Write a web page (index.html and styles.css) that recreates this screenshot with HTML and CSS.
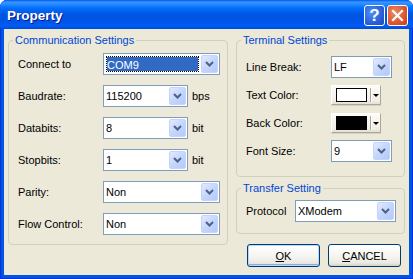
FILE: index.html
```html
<!DOCTYPE html>
<html lang="en">
  <head>
    <meta charset="UTF-8" />
    <title>Property</title>
    <link rel="stylesheet" href="styles.css">
  </head>
  <body>
    <div class="window">
      <!-- Title bar -->
      <div class="titlebar">
        <span class="title">Property</span>
        <div class="caption-buttons">
          <span class="cap-btn help">?</span>
          <span class="cap-btn close">
            <svg width="13" height="13" viewBox="0 0 13 13">
              <path d="M2 2 L11 11 M11 2 L2 11" stroke="#fff" stroke-width="2.2" stroke-linecap="square" fill="none" />
            </svg>
          </span>
        </div>
      </div>

      <div class="client">
        <fieldset class="group comm">
          <legend>Communication Settings</legend>
          <div class="rows">
            <div class="row">
              <label>Connect to</label>
              <div class="combo wide">
                <span class="value selected">COM9</span>
                <span class="arrow"><svg width="9" height="6" viewBox="0 0 9 6"><path d="M1 1 L4.5 4.5 L8 1" stroke="#4D6185" stroke-width="2" fill="none" /></svg></span>
              </div>
            </div>
            <div class="row">
              <label>Baudrate:</label>
              <div class="combo short">
                <span class="value">115200</span>
                <span class="arrow"><svg width="9" height="6" viewBox="0 0 9 6"><path d="M1 1 L4.5 4.5 L8 1" stroke="#4D6185" stroke-width="2" fill="none" /></svg></span>
              </div>
              <span class="unit">bps</span>
            </div>
            <div class="row">
              <label>Databits:</label>
              <div class="combo short">
                <span class="value">8</span>
                <span class="arrow"><svg width="9" height="6" viewBox="0 0 9 6"><path d="M1 1 L4.5 4.5 L8 1" stroke="#4D6185" stroke-width="2" fill="none" /></svg></span>
              </div>
              <span class="unit">bit</span>
            </div>
            <div class="row">
              <label>Stopbits:</label>
              <div class="combo short">
                <span class="value">1</span>
                <span class="arrow"><svg width="9" height="6" viewBox="0 0 9 6"><path d="M1 1 L4.5 4.5 L8 1" stroke="#4D6185" stroke-width="2" fill="none" /></svg></span>
              </div>
              <span class="unit">bit</span>
            </div>
            <div class="row">
              <label>Parity:</label>
              <div class="combo wide">
                <span class="value">Non</span>
                <span class="arrow"><svg width="9" height="6" viewBox="0 0 9 6"><path d="M1 1 L4.5 4.5 L8 1" stroke="#4D6185" stroke-width="2" fill="none" /></svg></span>
              </div>
            </div>
            <div class="row">
              <label>Flow Control:</label>
              <div class="combo wide">
                <span class="value">Non</span>
                <span class="arrow"><svg width="9" height="6" viewBox="0 0 9 6"><path d="M1 1 L4.5 4.5 L8 1" stroke="#4D6185" stroke-width="2" fill="none" /></svg></span>
              </div>
            </div>
          </div>
        </fieldset>

        <div class="right-col">
          <fieldset class="group terminal">
            <legend>Terminal Settings</legend>
            <div class="rows">
              <div class="row">
                <label>Line Break:</label>
                <div class="combo small">
                  <span class="value">LF</span>
                  <span class="arrow"><svg width="9" height="6" viewBox="0 0 9 6"><path d="M1 1 L4.5 4.5 L8 1" stroke="#4D6185" stroke-width="2" fill="none" /></svg></span>
                </div>
              </div>
              <div class="row">
                <label>Text Color:</label>
                <div class="color-btn">
                  <span class="swatch white"></span>
                  <span class="sep"></span>
                  <span class="tri"></span>
                </div>
              </div>
              <div class="row">
                <label>Back Color:</label>
                <div class="color-btn">
                  <span class="swatch black"></span>
                  <span class="sep"></span>
                  <span class="tri"></span>
                </div>
              </div>
              <div class="row">
                <label>Font Size:</label>
                <div class="combo small">
                  <span class="value">9</span>
                  <span class="arrow"><svg width="9" height="6" viewBox="0 0 9 6"><path d="M1 1 L4.5 4.5 L8 1" stroke="#4D6185" stroke-width="2" fill="none" /></svg></span>
                </div>
              </div>
            </div>
          </fieldset>

          <fieldset class="group transfer">
            <legend>Transfer Setting</legend>
            <div class="rows">
              <div class="row">
                <label class="narrow">Protocol</label>
                <div class="combo proto">
                  <span class="value">XModem</span>
                  <span class="arrow"><svg width="9" height="6" viewBox="0 0 9 6"><path d="M1 1 L4.5 4.5 L8 1" stroke="#4D6185" stroke-width="2" fill="none" /></svg></span>
                </div>
              </div>
            </div>
          </fieldset>

          <div class="buttons">
            <button class="btn default"><u>O</u>K</button>
            <button class="btn"><u>C</u>ANCEL</button>
          </div>
        </div>
      </div>
    </div>
  </body>
</html>
```

FILE: styles.css
```css
* {
  margin: 0;
  padding: 0;
  box-sizing: border-box;
}

body {
  font-family: "Liberation Sans", Arial, sans-serif;
  font-size: 11px;
  background: #fff;
}

/* Window frame */
.window {
  width: 413px;
  height: 279px;
  display: flex;
  flex-direction: column;
  background: #0055e5;
  border-radius: 7px 7px 0 0;
  box-shadow: inset 0 0 0 1px #0831d9;
  overflow: hidden;
}

.titlebar {
  height: 29px;
  display: flex;
  align-items: center;
  justify-content: space-between;
  padding: 2px 5px 0 7px;
  background: linear-gradient(
    #0058ee 0px,
    #3a93ff 2px,
    #288eff 4px,
    #127dff 6px,
    #036ffc 8px,
    #0262ee 11px,
    #0057e5 14px,
    #0054e1 18px,
    #0055eb 22px,
    #005bf5 25px,
    #0058ee 27px,
    #0048d0 29px
  );
}

.title {
  color: #fff;
  font-weight: bold;
  font-size: 13.5px;
  text-shadow: 1px 1px #0a1883;
}

.caption-buttons {
  display: flex;
  gap: 2px;
}

.cap-btn {
  width: 21px;
  height: 21px;
  border: 1px solid #fff;
  border-radius: 3px;
  display: flex;
  align-items: center;
  justify-content: center;
  color: #fff;
  font-weight: bold;
  font-size: 17px;
}

.help {
  background: radial-gradient(circle at 35% 35%, #4d8ff9, #2a60d8 60%, #1c48c0);
}

.close {
  background: radial-gradient(circle at 35% 35%, #f08a62, #dc5630 60%, #c2401c);
}

/* Dialog body */
.client {
  flex: 1;
  margin: 0 4px 4px;
  background: #ece9d8;
  display: flex;
  gap: 8px;
  padding: 5px 4px 0;
}

.group {
  border: 1px solid #d0d0bf;
  border-radius: 4px;
  padding: 6px 0 9px 4px;
  min-width: 0;
  align-self: flex-start;
}

.group legend {
  color: #0046d5;
  padding: 0 2px;
  line-height: 13px;
}

.comm {
  width: 220px;
}

.rows {
  display: flex;
  flex-direction: column;
  gap: 10px;
  padding-left: 5px;
}

.row {
  display: flex;
  align-items: center;
  height: 22px;
}

.row label {
  width: 85px;
  flex-shrink: 0;
}

.row label.narrow {
  width: 49px;
}

.unit {
  margin-left: 4px;
}

/* Combo boxes */
.combo {
  display: flex;
  height: 22px;
  padding: 1px;
  border: 1px solid #7f9db9;
  background: #fff;
}

.combo.wide { width: 117px; }
.combo.short { width: 85px; }
.combo.small { width: 61px; }
.combo.proto { width: 101px; }

.combo .value {
  flex: 1;
  padding-left: 1px;
  line-height: 18px;
}

.combo .value.selected {
  margin: 1px 2px 1px 1px;
  padding-left: 0;
  line-height: 16px;
  color: #fff;
  border: 1px dotted #000;
  background: linear-gradient(#316ac5, #316ac5) padding-box, #fff border-box;
}

.combo .arrow {
  width: 17px;
  height: 18px;
  display: flex;
  align-items: center;
  justify-content: center;
  border: 1px solid #c3d3fd;
  border-radius: 2px;
  background: linear-gradient(135deg, #e2ebfe, #c4d6fb 50%, #b4c9f7);
}

/* Colour picker buttons */
.color-btn {
  width: 50px;
  height: 20px;
  display: flex;
  align-items: center;
  padding-left: 4px;
  background: linear-gradient(#fbfbf8, #f1efe6 80%, #e3e0d2);
  border: 1px solid;
  border-color: #fff #aca899 #aca899 #fff;
  box-shadow: 0 1px 0 #d6d2c2;
}

.swatch {
  width: 31px;
  height: 14px;
  border: 1px solid #000;
}

.swatch.white { background: #fff; }
.swatch.black { background: #000; }

.sep {
  width: 2px;
  height: 14px;
  margin-left: 3px;
  border-left: 1px solid #aca899;
  border-right: 1px solid #fff;
}

.tri {
  margin-left: 1px;
  width: 0;
  height: 0;
  border-left: 3px solid transparent;
  border-right: 3px solid transparent;
  border-top: 3px solid #000;
}

.right-col {
  width: 169px;
  display: flex;
  flex-direction: column;
}

.terminal {
  align-self: stretch;
  padding: 9px 0 14px 4px;
}

.terminal .rows {
  gap: 6px;
}

.transfer {
  align-self: stretch;
  margin-top: 5px;
  padding: 5px 0 11px 4px;
}

/* OK / CANCEL */
.buttons {
  margin-top: 10px;
  display: flex;
  justify-content: flex-end;
  gap: 8px;
  padding-right: 4px;
}

.btn {
  width: 73px;
  height: 23px;
  font-family: "Liberation Sans", Arial, sans-serif;
  font-size: 11px;
  color: #000;
  border: 1px solid #003c74;
  border-radius: 3px;
  background: linear-gradient(#ffffff, #f5f4f0 55%, #ebe9e1 85%, #d6d0c5);
}

.btn.default {
  box-shadow: inset 0 0 0 1px #bcd4f6, inset 0 -2px 0 0 #89ade4;
}
```
